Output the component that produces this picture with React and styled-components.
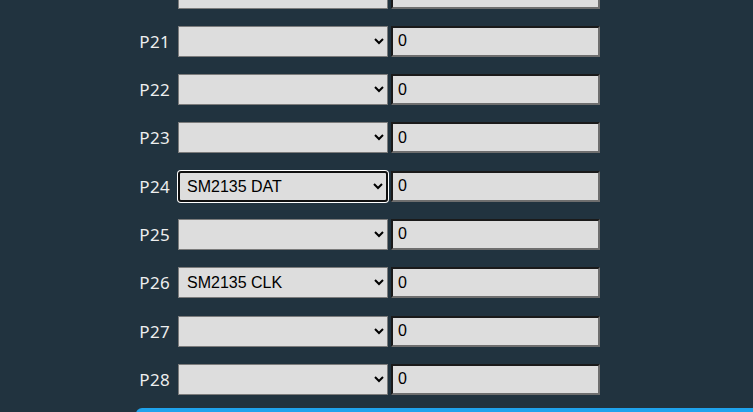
import React from 'react';
import styled, { createGlobalStyle } from 'styled-components';

const Global = createGlobalStyle`
  html, body {
    margin: 0;
    background: #21333f;
    overflow: hidden;
  }
`;

const Page = styled.div`
  width: 753px;
  height: 412px;
  overflow: hidden;
  padding-left: 136px;
  box-sizing: border-box;
`;

const Table = styled.div`
  display: grid;
  grid-template-columns: 39px 210px 209px;
  column-gap: 3px;
  row-gap: 17.3px;
  margin-top: -22.5px;
`;

const Label = styled.div`
  font-family: 'Noto Sans', 'Open Sans', sans-serif;
  font-size: 17px;
  letter-spacing: 0.3px;
  color: #eeeeee;
  padding-right: 5px;
  display: flex;
  align-items: center;
  justify-content: flex-end;
  height: 31px;
`;

const Select = styled.select`
  width: 210px;
  height: 31px;
  margin: 0;
  padding: 0 4px;
  box-sizing: border-box;
  background: #dddddd;
  color: #000;
  border: 1px solid #7b7b7b;
  border-radius: 0;
  font-family: 'Liberation Sans', Arial, sans-serif;
  font-size: 16px;
  outline: none;
  ${(p) =>
    p.$focused &&
    `
    border: 2px solid #101010;
    border-radius: 3px;
    box-shadow: 0 0 0 1px #ffffff;
    padding: 0 3px;
  `}
`;

const Field = styled.input`
  width: 209px;
  height: 31px;
  margin: 0;
  padding: 0 5px;
  box-sizing: border-box;
  background: #dddddd;
  color: #000;
  border-style: solid;
  border-width: 2px;
  border-color: #1a1a1a #6e6e6e #6e6e6e #1a1a1a;
  font-family: 'Liberation Sans', Arial, sans-serif;
  font-size: 16px;
  outline: none;
`;

const SaveButton = styled.div`
  margin-top: 13px;
  width: 700px;
  height: 40px;
  background: #1fa3ec;
  border-radius: 6px;
`;

const pins = [
  { name: '', value: '' },
  { name: 'P21', value: '' },
  { name: 'P22', value: '' },
  { name: 'P23', value: '' },
  { name: 'P24', value: 'SM2135 DAT', focused: true },
  { name: 'P25', value: '' },
  { name: 'P26', value: 'SM2135 CLK' },
  { name: 'P27', value: '' },
  { name: 'P28', value: '' },
];

export default function App() {
  return (
    <Page>
      <Global />
      <Table>
        {pins.map((p, i) => (
          <React.Fragment key={i}>
            <Label>{p.name}</Label>
            <Select $focused={p.focused} defaultValue={p.value}>
              <option value=""></option>
              <option value="SM2135 DAT">SM2135 DAT</option>
              <option value="SM2135 CLK">SM2135 CLK</option>
            </Select>
            <Field defaultValue="0" />
          </React.Fragment>
        ))}
      </Table>
      <SaveButton />
    </Page>
  );
}
